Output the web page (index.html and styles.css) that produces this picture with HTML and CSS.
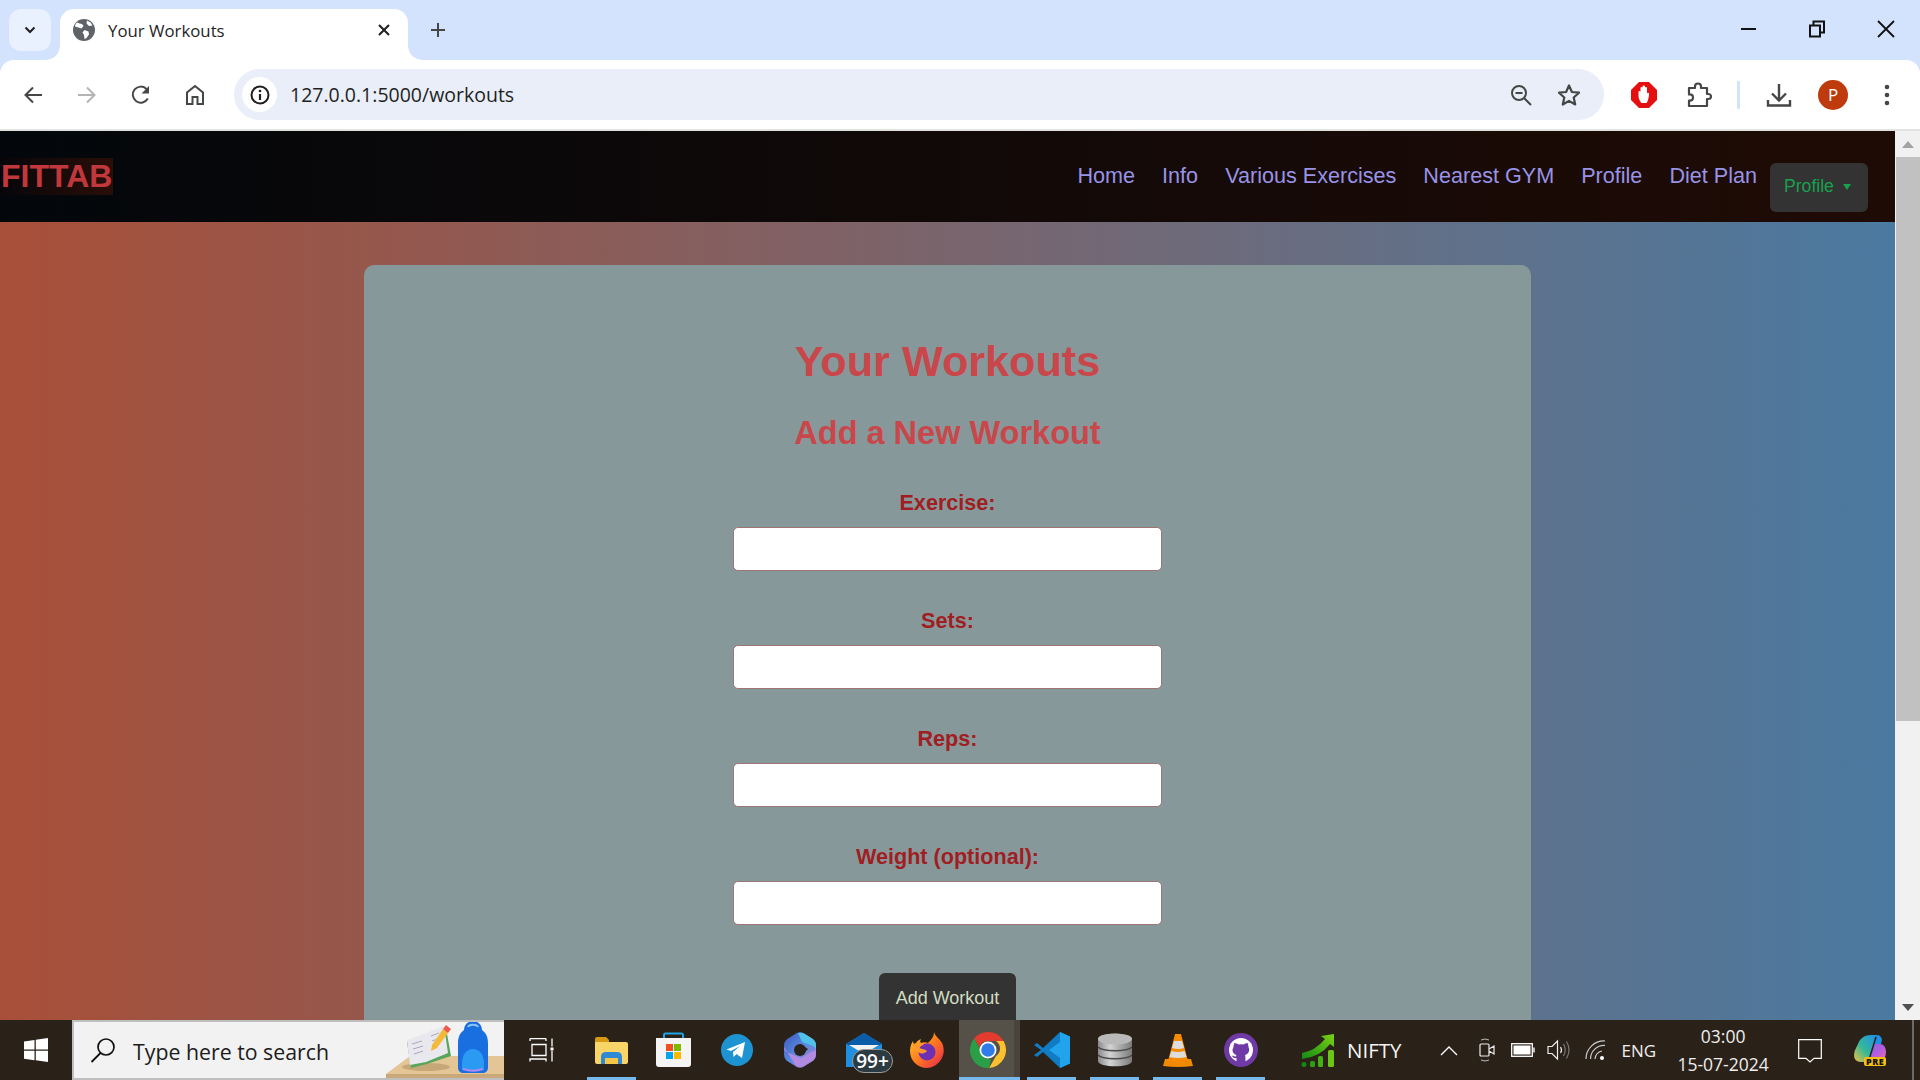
FILE: index.html
```html
<!DOCTYPE html>
<html lang="en">
<head>
<meta charset="utf-8">
<title>Your Workouts</title>
<link rel="stylesheet" href="styles.css">
</head>
<body>
<div class="screen">
  <header class="chrome">
    <div class="tabstrip">
      <div class="tab-search">
        <svg width="16" height="16" viewBox="0 0 16 16"><path d="M3.500 5.500 8 10l4.500-4.500" fill="none" stroke="#1f1f1f" stroke-width="2"/></svg>
      </div>
      <div class="tab">
        <svg class="favicon" width="22" height="22" viewBox="0 0 22 22"><circle cx="11" cy="11" r="11" fill="#5f6368"/><path d="M4 3.500c2 .5 3.500 1.500 5 1.500l1.500 2-2 2.500-3-1-3.500-1C2 5.500 3 4.500 4 3.500zM11.500 11l4 1.500.5 3-2.500 3.500-2 1-.5-4-1.500-2.500zM14 1.500l3.500 2 2 3-3.500.5-2.500-2.500z" fill="#fff"/></svg>
        <span class="tab-title">Your Workouts</span>
        <svg class="tab-close" width="16" height="16" viewBox="0 0 16 16"><path d="m3 3 10 10M13 3 3 13" stroke="#1f1f1f" stroke-width="2"/></svg>
      </div>
      <div class="new-tab">
        <svg width="18" height="18" viewBox="0 0 18 18"><path d="M9 2v14M2 9h14" stroke="#444746" stroke-width="2"/></svg>
      </div>
      <div class="win-controls">
        <div class="win-btn"><svg width="16" height="16" viewBox="0 0 16 16"><path d="M0 8h15" stroke="#111" stroke-width="2"/></svg></div>
        <div class="win-btn"><svg width="16" height="18" viewBox="0 0 16 18"><path d="M1 5.500h10v11H1zM4.500 5V1.500h10.500v11H11.500" fill="none" stroke="#111" stroke-width="2"/></svg></div>
        <div class="win-btn"><svg width="18" height="18" viewBox="0 0 18 18"><path d="m1 1 16 16M17 1 1 17" stroke="#111" stroke-width="1.800"/></svg></div>
      </div>
    </div>
    <div class="toolbar">
      <div class="tool"><svg width="20" height="20" viewBox="0 0 20 20"><path d="M19 10H3M10 2.500 2.500 10l7.500 7.500" fill="none" stroke="#444746" stroke-width="2"/></svg></div>
      <div class="tool"><svg width="20" height="20" viewBox="0 0 20 20"><path d="M1 10h16M10 2.500l7.500 7.500-7.500 7.500" fill="none" stroke="#b4b4b4" stroke-width="2"/></svg></div>
      <div class="tool"><svg width="20" height="20" viewBox="0 0 20 20"><path d="M16.800 13.500A8 8 0 1 1 15.500 4" fill="none" stroke="#444746" stroke-width="2"/><path d="M18 1v7.500h-7.500z" fill="#444746"/></svg></div>
      <div class="tool"><svg width="20" height="22" viewBox="0 0 20 22"><path d="M2 20V8.500L10 2l8 6.500V20h-5.500v-7h-5v7z" fill="none" stroke="#444746" stroke-width="2"/></svg></div>
      <div class="omnibox">
        <div class="chip"><svg width="20" height="20" viewBox="0 0 20 20"><circle cx="10" cy="10" r="8.500" fill="none" stroke="#1f1f1f" stroke-width="2"/><path d="M10 9v6" stroke="#1f1f1f" stroke-width="2.200"/><circle cx="10" cy="6" r="1.300" fill="#1f1f1f"/></svg></div>
        <span class="url">127.0.0.1:5000/workouts</span>
        <div class="omni-end">
          <div class="omni-icon"><svg width="24" height="24" viewBox="0 0 24 24"><circle cx="10" cy="10" r="7" fill="none" stroke="#444746" stroke-width="2"/><path d="M6.500 10h7M15 15l7 7" stroke="#444746" stroke-width="2"/></svg></div>
          <div class="omni-icon"><svg width="26" height="26" viewBox="0 0 26 26"><path d="m13 3.500 2.900 6.500 7.100.7-5.300 4.800 1.500 7L13 18.900 6.800 22.500l1.500-7L3 10.700l7.100-.7z" fill="none" stroke="#444746" stroke-width="2.200" stroke-linejoin="round"/></svg></div>
        </div>
      </div>
      <div class="ext"><svg width="26" height="26" viewBox="0 0 26 26"><path d="M8 0h10l8 8v10l-8 8H8l-8-8V8z" fill="#e40f10"/><path d="M7.500 14V10c0-1.500 2-1.500 2 0V6c0-1.500 2-1.500 2 0V4.500c0-1.500 2.500-1.500 2.500 0V6c0-1.500 2-1.500 2 0v5.500c0-1 2-1 2 0 0 3-1 8-2.500 9.500h-5c-1-1-3-4-3-7z" fill="#fff"/></svg></div>
      <div class="ext ext-next"><svg width="26" height="26" viewBox="0 0 26 26"><path d="M3 6h6V4.500a3 3 0 0 1 6 0V6h6v6h1.500a2.500 2.500 0 0 1 0 5H21v7H3v-5.500c3 .5 4-1 4-3s-1-3.500-4-3z" fill="none" stroke="#444746" stroke-width="2.200" stroke-linejoin="round"/></svg></div>
      <div class="tool-sep"></div>
      <div class="tool"><svg width="26" height="26" viewBox="0 0 26 26"><path d="M13 2v16M6 11.500l7 7 7-7M2 18v5.500h22V18" fill="none" stroke="#444746" stroke-width="2.400"/></svg></div>
      <div class="tool"><span class="avatar">P</span></div>
      <div class="tool"><svg width="6" height="22" viewBox="0 0 6 22"><circle cx="3" cy="3" r="2.300" fill="#444746"/><circle cx="3" cy="11" r="2.300" fill="#444746"/><circle cx="3" cy="19" r="2.300" fill="#444746"/></svg></div>
    </div>
    <div class="chrome-line"></div>
  </header>

  <div class="viewport">
    <div class="page">
      <nav class="navbar">
        <a class="brand">FITTAB</a>
        <ul class="nav-links">
          <li>Home</li>
          <li>Info</li>
          <li>Various Exercises</li>
          <li>Nearest GYM</li>
          <li>Profile</li>
          <li>Diet Plan</li>
        </ul>
        <button class="profile-btn">Profile<span class="caret"></span></button>
      </nav>
      <main class="card">
        <h1>Your Workouts</h1>
        <h2>Add a New Workout</h2>
        <form class="workout-form">
          <label>Exercise:</label>
          <input type="text">
          <label>Sets:</label>
          <input type="text">
          <label>Reps:</label>
          <input type="text">
          <label>Weight (optional):</label>
          <input type="text">
          <button type="button" class="add-btn">Add Workout</button>
        </form>
      </main>
    </div>
    <div class="scrollbar">
      <div class="sb-arrow"><span class="sb-up"></span></div>
      <div class="sb-track"><div class="sb-thumb"></div></div>
      <div class="sb-arrow"><span class="sb-down"></span></div>
    </div>
  </div>

  <footer class="taskbar">
    <div class="start"><svg width="24" height="24" viewBox="0 0 24 24"><path d="M0 3.500 10.500 2v9.500H0zM11.800 1.800 24 0v11.500H11.800zM0 12.700h10.500v9.500L0 20.700zM11.800 12.700H24V24l-12.200-1.800z" fill="#fff"/></svg></div>
    <div class="search">
      <svg class="search-glass" width="26" height="26" viewBox="0 0 26 26"><circle cx="16" cy="10" r="8" fill="none" stroke="#111" stroke-width="1.700"/><path d="M10.500 16 1.500 25" stroke="#111" stroke-width="1.800"/></svg>
      <span class="search-text">Type here to search</span>
      <svg class="search-art" width="118" height="58" viewBox="0 0 118 58">
        <path d="M0 54 24 36h94v18z" fill="#e3c596"/><path d="M0 54h118v4H0z" fill="#c9a87a"/>
        <ellipse cx="40" cy="47" rx="24" ry="4" fill="#c6a878"/>
        <path d="M21 22 41 16v28L25 48zM41 16l19-8 5 28-24 8z" fill="#58a55c"/>
        <path d="M21 20 40 13v29L24 45zM40 13l18-7 4 27-22 9z" fill="#e9e8ef"/>
        <path d="M26 24l10-3M27 29l10-3M28 34l9-3M45 16l8-3M46 21l8-3" stroke="#a9a8b8" stroke-width="1"/>
        <path d="m46 25 11-16 5 4-11 15-6 3z" fill="#f5b93a"/><path d="m57 9 3-4 5 4-3 4z" fill="#ee5a50"/>
        <path d="M78 10c0-6 5-9 9-9s9 3 9 9c5 4 6 8 6 14v23c0 4-2 6-6 6H78c-4 0-6-2-6-6V24c0-6 1-10 6-14z" fill="#1a6fe0"/>
        <path d="M76 44c0-10 5-15 11-15s11 5 11 15v6H76z" fill="#2b9af3"/>
        <path d="M77 49c6 2 14 2 20 0" stroke="#b58af0" stroke-width="2" fill="none"/>
        <path d="M82 7c1-3 9-3 10 0" stroke="#8cc4ff" stroke-width="2" fill="none"/>
      </svg>
    </div>
    <div class="taskview"><svg width="26" height="24" viewBox="0 0 26 24"><path d="M1 .5h16M3 6.500h14v11H3zM1 23.500V21h16v2.500M1 3V.5M17 3V.5M23 .5v8M23 13v10.500" fill="none" stroke="#fff" stroke-width="1.300"/><rect x="21.500" y="9.500" width="3" height="3" fill="#fff"/></svg></div>

    <div class="tb-item on first"><svg width="33" height="28" viewBox="0 0 33 28"><path d="M0 3q0-2 2-2h9l3 3v4H0z" fill="#d69a12"/><path d="M0 6h31q2 0 2 2v18q0 2-2 2H2q-2 0-2-2z" fill="#f9d466"/><path d="M6 28v-7q0-5 5-5h11q5 0 5 5v7h-4v-6H10v6z" fill="#2f8ad6"/><path d="M10 22h13v6H10z" fill="#f6c648"/></svg></div>
    <div class="tb-item"><svg width="35" height="36" viewBox="0 0 35 36"><path d="M8 7V3q0-1.500 1.500-1.500h16Q27 1.500 27 3v4" fill="none" stroke="#1ca6e6" stroke-width="2"/><path d="M0 6h35v26q0 3-3 3H3q-3 0-3-3z" fill="#f4f4f4"/><path d="M10 12h7v7h-7z" fill="#f25022"/><path d="M18 12h7v7h-7z" fill="#7fba00"/><path d="M10 20h7v7h-7z" fill="#00a4ef"/><path d="M18 20h7v7h-7z" fill="#ffb900"/></svg></div>
    <div class="tb-item"><svg width="32" height="32" viewBox="0 0 32 32"><circle cx="16" cy="16" r="16" fill="#1d93d2"/><path d="m5.500 15.500 18.500-7.500-3 16-5.500-4-3 3-.5-5 7-6-9 5z" fill="#fff"/></svg></div>
    <div class="tb-item"><svg width="32" height="36" viewBox="0 0 32 36"><defs><linearGradient id="m1" x1="0" y1="0" x2="1" y2="1"><stop offset="0" stop-color="#3a57c4"/><stop offset=".5" stop-color="#5b8bdc"/><stop offset="1" stop-color="#a67bd8"/></linearGradient></defs><path d="M12 1.500q4-2.500 8 0l8 5q4 2.500 4 7v9q0 4.500-4 7l-8 5q-4 2.500-8 0l-8-5q-4-2.500-4-7v-9q0-4.500 4-7z" fill="url(#m1)"/><path d="M14 1q4-1 7 1l7 4.500q4 2.500 4 6.500v6q0-4-4-5.500L18 10z" fill="#4ec2e8"/><path d="M0 15q0 5 5 6l12 5 10-6 5-2v4q0 4-4 7l-8 5q-4 2-8 0z" fill="#b18ae2"/><circle cx="16" cy="18" r="6" fill="#2a2118"/><path d="M16 12 24 17l-5 5z" fill="#2a2118"/></svg></div>
    <div class="tb-item mail">
      <svg width="36" height="34" viewBox="0 0 36 34"><path d="M0 11 18 0l18 11v23H0z" fill="#1f8fe2"/><path d="M0 11 18 0l18 11-18 9z" fill="#0a5ca8"/><path d="M3 12h30L18 21z" fill="#f2f2f2"/></svg>
      <span class="mail-badge">99+</span>
    </div>
    <div class="tb-item"><svg width="34" height="36" viewBox="0 0 34 36"><defs><linearGradient id="f1" x1="0" y1="0" x2="1" y2="1"><stop offset="0" stop-color="#ffcb2d"/><stop offset=".5" stop-color="#ff7a1f"/><stop offset="1" stop-color="#e5224f"/></linearGradient></defs><path d="M24 0c1 4 5 6 8 11 3 6 2 13-2 18-3 4-8 7-13 7C8 36 0 29 0 19c0-4 1-7 3-10 0 2 1 3 2 4 1-3 3-5 6-6-1 2-1 3 0 4 2-1 5-1 7 0 3-3 6-6 6-11z" fill="url(#f1)"/><circle cx="17" cy="20" r="8.500" fill="#6f2fb3"/><path d="M3 12c3-1 8-2 11 1-3 0-5 1-5 3 2 1 6 1 8 3-2 3-7 3-9 1-3-2-5-5-5-8z" fill="#ff9a2a"/></svg></div>
    <div class="tb-item active"><svg width="36" height="36" viewBox="0 0 36 36"><path d="M18 0a18 18 0 0 1 15.600 9H18a9 9 0 0 0-8.500 6L4.100 6.500A18 18 0 0 1 18 0z" fill="#e33b2e"/><path d="M33.600 9A18 18 0 0 1 19 36l7-12a9 9 0 0 0 0-15z" fill="#fbc02d"/><path d="M19 36A18 18 0 0 1 4.100 6.500L11 18.500a9 9 0 0 0 10 8.700z" fill="#2b9e48"/><circle cx="18" cy="18" r="8.500" fill="#fff"/><circle cx="18" cy="18" r="6.800" fill="#2f7ce8"/></svg></div>
    <div class="tb-item on"><svg width="36" height="36" viewBox="0 0 36 36"><path d="M26 0 36 4.500v27L26 36 9 20l-6 5-3-2 7-5-7-5 3-2 6 5z" fill="#0f7cc4"/><path d="M26 0 36 4.500v27L26 36zM26 10 15 18l11 8z" fill="#22a4ec"/></svg></div>
    <div class="tb-item on"><svg width="34" height="34" viewBox="0 0 34 34"><defs><linearGradient id="d1" x1="0" y1="0" x2="1" y2="0"><stop offset="0" stop-color="#8a8a8a"/><stop offset=".35" stop-color="#d4d4d4"/><stop offset="1" stop-color="#7a7a7a"/></linearGradient></defs><path d="M0 6c0-7 34-7 34 0v22c0 7-34 7-34 0z" fill="url(#d1)"/><ellipse cx="17" cy="6" rx="17" ry="5.500" fill="#b9b9b9"/><path d="M0 14c4 5 30 5 34 0M0 22c4 5 30 5 34 0" fill="none" stroke="#4b4b4b" stroke-width="1.500"/></svg></div>
    <div class="tb-item on"><svg width="30" height="34" viewBox="0 0 30 34"><path d="M2 26 0 33q15 2 30 0l-2-7z" fill="#f08a00"/><path d="M12 1h6l7 27q-10 3-20 0z" fill="#f78a05"/><path d="m11 8h8l2 7q-6 2-12 0zM8.500 18q6.500 2 13 0l2 6q-8.500 2-17 0z" fill="#ddd"/></svg></div>
    <div class="tb-item on"><svg width="34" height="34" viewBox="0 0 34 34"><circle cx="17" cy="17" r="17" fill="#6f3aa6"/><circle cx="17" cy="17" r="12" fill="#fff"/><path d="M9.500 14c0-2 .5-3 1-4 1.500 0 3 .8 4 1.500q2.500-.5 5 0c1-.7 2.500-1.500 4-1.500.5 1 1 2 1 4 1.500 3 .5 7-3.500 8 .5 1 .5 2 .5 7h-9c0-2 0-3 .2-4-2.200.8-4-.5-5-2.500 1.500 0 2.500 1 4 1.300 0-.5.200-1 .8-1.800-4-1-5-5-3-8z" fill="#6f3aa6"/></svg></div>

    <div class="news">
      <svg width="34" height="34" viewBox="0 0 34 34"><defs><linearGradient id="n1" x1="0" y1="1" x2="1" y2="0"><stop offset="0" stop-color="#128a12"/><stop offset="1" stop-color="#7cd215"/></linearGradient></defs><path d="M1 20q13-2 23-14l-4-3 13-2v13l-4-3Q19 24 1 26z" fill="url(#n1)"/><circle cx="3" cy="31.500" r="2.500" fill="#128a12"/><rect x="9" y="28" width="5" height="6" rx="1.500" fill="#2ba012"/><rect x="17" y="23" width="5" height="11" rx="1.500" fill="#45b012"/><rect x="27" y="17" width="6" height="17" rx="1.500" fill="#6cc615"/></svg>
      <span class="news-text">NIFTY</span>
    </div>

    <div class="tray">
      <svg class="tray-chev" width="18" height="11" viewBox="0 0 18 11"><path d="m1 10 8-8 8 8" fill="none" stroke="#fff" stroke-width="1.300"/></svg>
      <svg class="tray-cam" width="16" height="24" viewBox="0 0 16 24"><path d="M1 7q0-1 1-1h7q1 0 1 1v10q0 1-1 1H2q-1 0-1-1zM10 11l5-3v8l-5-3" fill="none" stroke="#eee" stroke-width="1.200"/><path d="M2 2q4-2 8 0M2 22q4 2 8 0" fill="none" stroke="#bbb" stroke-width="1"/></svg>
      <svg class="tray-batt" width="24" height="14" viewBox="0 0 24 14"><rect x=".7" y=".7" width="20.600" height="12.600" fill="none" stroke="#fff" stroke-width="1.300"/><rect x="2.500" y="2.500" width="17" height="9" fill="#fff"/><rect x="22" y="4.500" width="2" height="5" fill="#bbb"/></svg>
      <svg class="tray-vol" width="23" height="22" viewBox="0 0 23 22"><path d="M1 7.500h4L10.500 2v18L5 14.500H1z" fill="none" stroke="#eee" stroke-width="1.200"/><path d="M13.500 8q2 3 0 6" fill="none" stroke="#eee" stroke-width="1.200"/><path d="M16.500 5q3.500 6 0 12M19.500 2.500q5 8.500 0 17" fill="none" stroke="#777" stroke-width="1.200"/></svg>
      <svg class="tray-wifi" width="21" height="20" viewBox="0 0 21 20"><path d="M1 19A18 18 0 0 1 20 1M5.500 19A13.500 13.500 0 0 1 20 5.500M10 19a9 9 0 0 1 7-8" fill="none" stroke="#ccc" stroke-width="1.200"/><circle cx="17" cy="18" r="2" fill="#fff"/></svg>
      <span class="tray-lang">ENG</span>
      <div class="clock"><span>03:00</span><span>15-07-2024</span></div>
      <svg class="tray-note" width="24" height="24" viewBox="0 0 24 24"><path d="M.7.7h22.600v18.600H16L12 23l-4-3.700H.7z" fill="none" stroke="#fff" stroke-width="1.200"/></svg>
      <div class="copilot">
        <svg width="32" height="30" viewBox="0 0 32 30"><defs><linearGradient id="c1" x1="0" y1="1" x2="1" y2="0"><stop offset="0" stop-color="#f5c33a"/><stop offset=".45" stop-color="#34b89a"/><stop offset="1" stop-color="#1f8fe8"/></linearGradient><linearGradient id="c2" x1="0" y1="0" x2="1" y2="1"><stop offset="0" stop-color="#7a6ae8"/><stop offset=".5" stop-color="#b45ce0"/><stop offset="1" stop-color="#ef6fa8"/></linearGradient></defs><path d="M11 1q3-1 6-1h6l-8 27H7q-7 0-7-7 0-4 3-9 3-8 8-10z" fill="url(#c1)"/><path d="M23 0q4 0 5 5l-1 4h-8z" fill="#1f8fe8"/><path d="M20 9h6q5 0 6 7 0 8-5 11H14z" fill="url(#c2)"/><path d="m22 2-8 26" stroke="#2a2118" stroke-width="1.500"/></svg>
        <span class="pre">PRE</span>
      </div>
    </div>
    <div class="desk-peek"></div>
  </footer>
</div>
</body>
</html>
```
FILE: styles.css
```css
* { box-sizing: border-box; }
html, body { margin: 0; height: 100%; overflow: hidden; }
body { font-family: "Liberation Sans", Arial, sans-serif; }
.screen { display: flex; flex-direction: column; width: 1920px; height: 1080px; }

/* browser chrome */
.chrome { flex: none; height: 131px; background: #d3e3fd; font-family: "Open Sans", "Noto Sans", sans-serif; }
.tabstrip { display: flex; align-items: flex-start; height: 60px; padding-top: 9px; padding-left: 9px; }
.tab-search { width: 42px; height: 42px; border-radius: 12px; background: #e9f1fe; display: flex; align-items: center; justify-content: center; }
.tab { position: relative; width: 348px; height: 51px; margin-left: 9px; background: #fff; border-radius: 14px 14px 0 0; display: flex; align-items: center; padding: 0 16px 9px 13px; }
.tab::before, .tab::after { content: ""; position: absolute; bottom: 0; width: 14px; height: 14px; }
.tab::before { left: -14px; background: radial-gradient(circle at 0 0, transparent 13.500px, #fff 14px); }
.tab::after { right: -14px; background: radial-gradient(circle at 100% 0, transparent 13.500px, #fff 14px); }
.favicon { flex: none; }
.tab-title { margin-left: 13px; font-size: 16.800px; color: #1f1f1f; flex: 1; }
.tab-close { flex: none; }
.new-tab { width: 30px; height: 42px; margin-left: 15px; display: flex; align-items: center; justify-content: center; }
.win-controls { margin-left: auto; display: flex; height: 42px; margin-top: -1px; }
.win-btn { width: 68.500px; height: 42px; display: flex; align-items: center; justify-content: center; }

.toolbar { height: 69px; background: #fff; border-radius: 14px 14px 0 0; display: flex; align-items: center; padding-left: 6px; }
.chrome-line { height: 2px; background: #e1e3e1; }
.tool { flex: none; width: 54px; height: 40px; display: flex; align-items: center; justify-content: center; }
.omnibox { flex: none; width: 1370px; height: 51px; margin: 0 12px; border-radius: 26px; background: #e9eef8; display: flex; align-items: center; padding: 0 11px 0 8px; }
.chip { width: 35px; height: 35px; border-radius: 50%; background: #fff; display: flex; align-items: center; justify-content: center; }
.url { margin-left: 13px; font-size: 19.500px; color: #1f1f1f; }
.omni-end { margin-left: auto; display: flex; }
.omni-icon { width: 48px; height: 40px; display: flex; align-items: center; justify-content: center; }
.ext { flex: none; width: 56px; height: 40px; display: flex; align-items: center; justify-content: center; }
.ext-next { margin-left: -1px; }
.tool-sep { flex: none; width: 3px; height: 28px; margin: 0 12px 0 10px; background: #d3e3fd; }
.avatar { width: 30px; height: 30px; border-radius: 50%; background: #bf3a0c; color: #fff; font-size: 17px; display: flex; align-items: center; justify-content: center; }

/* page viewport */
.viewport { flex: 1; min-height: 0; display: flex; overflow: hidden; }
.page { flex: 1; min-width: 0; height: 889px; overflow: hidden; background: linear-gradient(to right, #a84f38, #4b7aa1); }
.navbar { height: 91px; display: flex; align-items: center; background: linear-gradient(to right, #03070b, #1f0b05); padding-right: 27px; }
.brand { background: linear-gradient(to right, #06060a, #2a0e08); color: #c0383c; font-size: 32px; font-weight: 700; line-height: 37px; padding: 0 1px; margin-top: -1px; }
.nav-links { list-style: none; display: flex; gap: 27px; margin: 0 13px 0 auto; padding: 0; font-size: 21.600px; color: #9893e6; position: relative; top: -1px; }
.profile-btn { width: 98px; height: 49px; border: 0; border-radius: 6px; background: #333; color: #18a04e; font: 17.600px "Liberation Sans", Arial, sans-serif; text-align: left; padding: 0 0 2px 14px; margin-top: 22px; }
.caret { display: inline-block; margin-left: 9px; vertical-align: middle; border-left: 4px solid transparent; border-right: 4px solid transparent; border-top: 6px solid #18a04e; }
.card { width: 1167px; height: 900px; margin: 43px auto 0; background: #87989a; border-radius: 10px; padding-top: 71px; color: #c9474a; text-align: center; }
h1 { margin: 0; font-size: 43.200px; line-height: 50px; font-weight: 700; }
h2 { margin: 29px 0 0; font-size: 32.500px; line-height: 37px; font-weight: 700; }
.workout-form { display: flex; flex-direction: column; align-items: center; margin-top: 38px; }
.workout-form label { display: block; font-size: 21.600px; line-height: 26px; font-weight: 700; color: #a01e22; margin-bottom: 11px; }
.workout-form input { display: block; width: 429px; height: 44px; padding: 0; margin-bottom: 37px; background: #fff; border: 1px solid #9c7676; border-radius: 5px; }
.add-btn { margin-top: 11px; width: 137px; height: 60px; border: 0; border-radius: 6px; background: #333; color: #d2dcc0; font: 18px "Liberation Sans", Arial, sans-serif; padding: 0 0 10px; }

.scrollbar { flex: none; width: 25px; background: #f1f1f1; display: flex; flex-direction: column; }
.sb-arrow { height: 26px; display: flex; align-items: center; justify-content: center; }
.sb-up { border-left: 6px solid transparent; border-right: 6px solid transparent; border-bottom: 7px solid #a3a3a3; }
.sb-down { border-left: 6px solid transparent; border-right: 6px solid transparent; border-top: 7px solid #505050; }
.sb-track { flex: 1; padding-left: 1px; }
.sb-thumb { height: 564px; background: #c1c1c1; }

/* taskbar */
.taskbar { flex: none; height: 60px; background: #2a2118; display: flex; align-items: center; position: relative; font-family: "Open Sans", "Noto Sans", sans-serif; color: #f0f0f0; }
.start { flex: none; width: 72px; display: flex; justify-content: center; padding-right: 1px; }
.search { flex: none; position: relative; width: 432px; height: 60px; background: #f2f2f2; border: 2px solid #bfbfbf; border-right: 0; display: flex; align-items: center; padding-left: 16px; overflow: hidden; }
.search-glass { flex: none; }
.search-text { margin-left: 17px; color: #1c1c1c; font-size: 21.300px; position: relative; top: 1px; }
.search-art { position: absolute; right: 0; bottom: 0; }
.taskview { flex: none; width: 76px; display: flex; justify-content: center; }
.tb-item { flex: none; position: relative; width: 63px; height: 60px; display: flex; align-items: center; justify-content: center; }
.tb-item.first { margin-right: -1px; }
.tb-item.on::after { content: ""; position: absolute; bottom: 0; left: 7px; right: 7px; height: 3px; background: #76b9ed; }
.tb-item.active { background: #555048; width: 61px; margin-left: 1px; padding-right: 3px; box-shadow: inset -6px 0 0 #48433b; }
.tb-item.active::after { content: ""; position: absolute; bottom: 0; left: 0; right: 0; height: 3px; background: #76b9ed; }
.mail { margin-left: 1px; }
.mail-badge { position: absolute; left: 20px; bottom: 7px; width: 41px; height: 24px; border: 1px solid #9a9a9a; border-radius: 12px; background: #2c3a42; color: #fff; font-size: 19px; font-weight: 600; line-height: 22px; text-align: center; }
.news { flex: none; display: flex; align-items: center; margin-left: 29px; }
.news-text { margin-left: 12px; font-size: 20.500px; color: #f4f4f4; }
.tray { flex: none; display: flex; align-items: center; margin-left: 38px; }
.tray-cam { margin-left: 21px; }
.tray-batt { margin-left: 16px; }
.tray-vol { margin-left: 12px; }
.tray-wifi { margin-left: 15px; }
.tray-lang { margin-left: 16px; font-size: 17px; color: #eee; }
.clock { width: 116px; margin-left: 9px; display: flex; flex-direction: column; align-items: center; font-size: 17.500px; line-height: 28px; color: #eee; }
.tray-note { margin-left: 17px; margin-top: 2px; }
.copilot { position: relative; margin-left: 32px; width: 32px; height: 30px; }
.pre { position: absolute; right: 0; bottom: -1px; width: 22px; height: 9px; background: #f5c011; color: #111; font-size: 9px; font-weight: 800; line-height: 9px; text-align: center; border-radius: 2px; letter-spacing: .5px; }
.desk-peek { position: absolute; right: 6px; top: 0; width: 2px; height: 60px; background: #6a6a6a; }
```
